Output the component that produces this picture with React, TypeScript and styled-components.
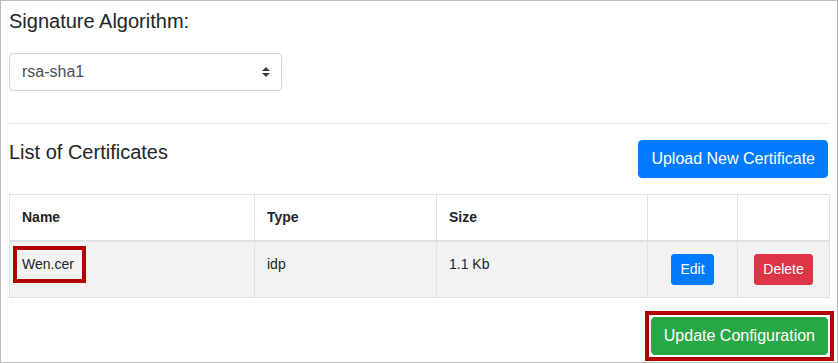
import styled, {createGlobalStyle} from "styled-components";

const GlobalStyle = createGlobalStyle`
    html, body {
        margin: 0;
        padding: 0;
        background: #ffffff;
    }

    body {
        font-family: "Liberation Sans", Arial, sans-serif;
        color: #212529;
    }
`;

const certificates = [
    {name: "Wen.cer", type: "idp", size: "1.1 Kb"},
];

export default function App() {
    return <>
        <GlobalStyle/>
        <Frame>
            <Label>Signature Algorithm:</Label>
            <SelectWrapper>
                <Select defaultValue="rsa-sha1">
                    <option value="rsa-sha1">rsa-sha1</option>
                    <option value="rsa-sha256">rsa-sha256</option>
                </Select>
                <SelectArrows width="8" height="10" viewBox="0 0 4 5">
                    <path fill="#343a40" d="M2 0L0 2h4zm0 5L0 3h4z"/>
                </SelectArrows>
            </SelectWrapper>
            <Divider/>
            <SectionHeader>
                <Title>List of Certificates</Title>
                <Button $variant="primary">Upload New Certificate</Button>
            </SectionHeader>
            <Table>
                <thead>
                <tr>
                    <Th $width={245}>Name</Th>
                    <Th $width={182}>Type</Th>
                    <Th $width={211}>Size</Th>
                    <Th $width={90}></Th>
                    <Th $width={92}></Th>
                </tr>
                </thead>
                <tbody>
                {certificates.map(cert => (
                    <StripedRow key={cert.name}>
                        <Td><Highlight>{cert.name}</Highlight></Td>
                        <Td>{cert.type}</Td>
                        <Td>{cert.size}</Td>
                        <Td $center><SmallButton $variant="primary">Edit</SmallButton></Td>
                        <Td $center><SmallButton $variant="danger">Delete</SmallButton></Td>
                    </StripedRow>
                ))}
                </tbody>
            </Table>
            <Footer>
                <Marked>
                    <Button $variant="success">Update Configuration</Button>
                </Marked>
            </Footer>
        </Frame>
    </>
}

const colors = {
    primary: "#007bff",
    danger: "#dc3545",
    success: "#28a745",
} as const;

type Variant = keyof typeof colors;

const Frame = styled.div`
    box-sizing: border-box;
    width: 838px;
    height: 363px;
    border: 1px solid #bbbbbb;
    padding: 8px 9px 8px 8px;
    overflow: hidden;
`;

const Label = styled.div`
    font-size: 20px;
    line-height: 1.2;
    margin-bottom: 20px;
`;

const SelectWrapper = styled.div`
    position: relative;
    width: 273px;
`;

const Select = styled.select`
    box-sizing: border-box;
    width: 100%;
    height: 38px;
    padding: 6px 28px 6px 12px;
    border: 1px solid #ced4da;
    border-radius: 4px;
    background: #ffffff;
    color: #495057;
    font-family: inherit;
    font-size: 16px;
    line-height: 1.5;
    appearance: none;
    -webkit-appearance: none;
    outline: none;
`;

const SelectArrows = styled.svg`
    position: absolute;
    right: 12px;
    top: 14px;
    pointer-events: none;
`;

const Divider = styled.hr`
    margin: 32px 0 16px;
    border: 0;
    border-top: 1px solid rgba(0, 0, 0, 0.1);
`;

const SectionHeader = styled.div`
    display: flex;
    justify-content: space-between;
    align-items: flex-start;
    margin-bottom: 16px;
`;

const Title = styled.div`
    font-size: 20px;
    line-height: 1.2;
`;

const Button = styled.button<{ $variant: Variant }>`
    font-family: inherit;
    font-size: 16px;
    line-height: 1.5;
    padding: 6px 12px;
    border: 1px solid ${({$variant}) => colors[$variant]};
    border-radius: 4px;
    background: ${({$variant}) => colors[$variant]};
    color: #ffffff;
    cursor: pointer;
`;

const SmallButton = styled(Button)`
    font-size: 14px;
    padding: 4px 8px;
    border-radius: 3px;
`;

const Marked = styled.div`
    display: flex;
    outline: 4px solid #b30000;
    outline-offset: 2px;
`;

const Table = styled.table`
    width: 100%;
    table-layout: fixed;
    border-collapse: collapse;
    font-size: 14px;
    line-height: 1.5;
    margin-bottom: 19px;
`;

const Th = styled.th<{ $width: number }>`
    box-sizing: border-box;
    width: ${({$width}) => $width}px;
    padding: 12px;
    text-align: left;
    vertical-align: bottom;
    font-weight: 700;
    border: 1px solid #dee2e6;
    border-bottom-width: 2px;
`;

const StripedRow = styled.tr`
    &:nth-child(odd) {
        background: #f2f2f2;
    }
`;

const Td = styled.td<{ $center?: boolean }>`
    padding: 12px;
    vertical-align: top;
    text-align: ${({$center}) => $center ? "center" : "left"};
    border: 1px solid #dee2e6;
`;

const Highlight = styled.span`
    display: inline-block;
    padding: 4px 8px 4px 5px;
    margin: -8px -12px -9px -9px;
    border: 4px solid #b30000;
`;

const Footer = styled.div`
    display: flex;
    justify-content: flex-end;
`;
